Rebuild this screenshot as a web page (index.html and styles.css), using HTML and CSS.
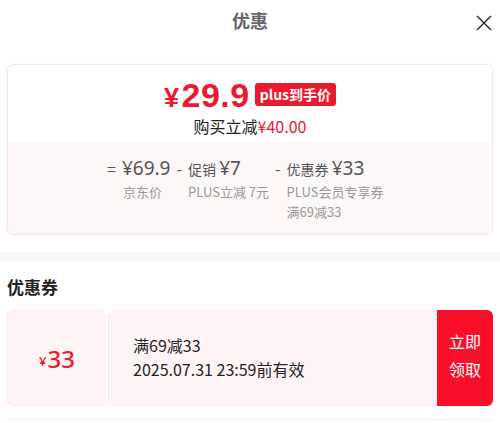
FILE: index.html
```html
<!DOCTYPE html>
<html lang="zh-CN">
<head>
  <meta charset="UTF-8" />
  <meta name="viewport" content="width=device-width, initial-scale=1.0" />
  <title>优惠</title>
  <link rel="stylesheet" href="styles.css">
</head>
<body>
  <div class="header">
    <h1 class="title">优惠</h1>
    <span class="close">
      <svg width="16" height="16" viewBox="0 0 16 16"><path d="M1 1L15 15M15 1L1 15" stroke="#222" stroke-width="1.4" fill="none"/></svg>
    </span>
  </div>

  <div class="card">
    <div class="card-top">
      <div class="price-line">
        <span class="price"><span class="yen">¥</span>29.9</span>
        <span class="badge">plus到手价</span>
      </div>
      <div class="save">购买立减<span class="red">¥40.00</span></div>
    </div>
    <div class="card-bottom">
      <div class="calc">
        <span class="op">=</span>
        <div class="col">
          <div class="val"><span class="num">¥69.9</span></div>
          <div class="lbl">京东价</div>
        </div>
      </div>
      <div class="calc">
        <span class="op">-</span>
        <div class="col">
          <div class="val">促销 <span class="num">¥7</span></div>
          <div class="lbl">PLUS立减 7元</div>
        </div>
      </div>
      <div class="calc">
        <span class="op">-</span>
        <div class="col">
          <div class="val">优惠券 <span class="num">¥33</span></div>
          <div class="lbl">PLUS会员专享券<br>满69减33</div>
        </div>
      </div>
    </div>
  </div>

  <div class="strip"></div>

  <h2 class="section-title">优惠券</h2>
  <div class="coupon">
    <div class="coupon-amount"><span class="small">¥</span>33</div>
    <div class="coupon-info">
      <div>满69减33</div>
      <div>2025.07.31 23:59前有效</div>
    </div>
    <button class="coupon-btn">立即<br>领取</button>
  </div>
  <div class="foot-line"></div>
</body>
</html>
```

FILE: styles.css
```css
body {
  margin: 0;
  background: #fff;
  font-family: "Noto Sans CJK SC", "Noto Sans", sans-serif;
  color: #333;
}
.header {
  position: relative;
  height: 40px;
  display: flex;
  align-items: center;
  justify-content: center;
}
.title {
  margin: 0;
  font-size: 18px;
  font-weight: bold;
  color: #666;
  line-height: 36px;
}
.close {
  position: absolute;
  right: 8px;
  top: 12px;
  width: 16px;
  height: 16px;
}
.card {
  margin: 24px 7px 0;
  border: 1px solid #f0eaea;
  border-radius: 6px;
  overflow: hidden;
  box-shadow: 0 0 3px rgba(0, 0, 0, 0.04);
}
.card-top {
  background: #fff;
  padding: 15px 0 5px;
  height: 58px;
  text-align: center;
}
.price-line {
  display: flex;
  justify-content: center;
  align-items: center;
  height: 32px;
}
.price {
  color: #ec1a2e;
  font-size: 34px;
  font-weight: bold;
  line-height: 32px;
  font-family: "Liberation Sans", sans-serif;
  letter-spacing: 0.5px;
}
.price .yen {
  font-size: 27px;
  margin-right: 2px;
}
.badge {
  background: #e91b2c;
  color: #fff;
  font-size: 14px;
  font-weight: bold;
  padding: 0 5px;
  height: 23px;
  line-height: 23px;
  border-radius: 3px;
  margin-left: 5px;
  margin-top: -4px;
}
.save {
  font-size: 16px;
  line-height: 22px;
  margin-top: 3px;
  color: #222;
}
.red {
  color: #e31a2c;
}
.card-bottom {
  background: #fdf7f7;
  display: flex;
  padding: 12px 0 15px 99px;
  height: 64px;
}
.calc {
  display: flex;
}
.op {
  font-size: 16px;
  color: #555;
  line-height: 26px;
  margin-right: 6px;
}
.val {
  font-size: 14px;
  color: #555;
  line-height: 26px;
  white-space: nowrap;
}
.num {
  font-size: 19px;
  font-family: "Noto Sans", sans-serif;
}
.lbl {
  font-size: 13px;
  color: #999;
  line-height: 20px;
}
.calc:first-child .col {
  margin-right: 6px;
}
.calc:first-child .lbl {
  padding-left: 1px;
}
.calc:nth-child(2) .col {
  margin-right: 6px;
}
.strip {
  height: 9px;
  background: #f6f6fb;
  margin-top: 17px;
}
.section-title {
  margin: 15px 7px 0;
  font-size: 17px;
  font-weight: bold;
  color: #222;
  line-height: 22px;
}
.coupon {
  display: flex;
  margin: 12px 7px 0;
  height: 96px;
}
.coupon-amount {
  width: 98px;
  background: #fef4f5;
  border: 1px solid #fbeaec;
  border-right: none;
  border-radius: 6px 0 0 6px;
  display: flex;
  align-items: center;
  justify-content: center;
  color: #ec1a2e;
  font-size: 24px;
  font-weight: 500;
  font-family: "Noto Sans", sans-serif;
  position: relative;
}
.coupon-amount .small {
  font-size: 13px;
  margin-top: 6px;
  margin-right: 1px;
}
.coupon-amount::before,
.coupon-amount::after {
  content: "";
  position: absolute;
  right: -5px;
  width: 8px;
  height: 8px;
  border-radius: 50%;
  background: #fff;
  z-index: 1;
}
.coupon-amount::before {
  top: -5px;
}
.coupon-amount::after {
  bottom: -5px;
}
.coupon-info {
  flex: 1;
  background: #fef4f5;
  border: 1px solid #fbeaec;
  border-left: 1px solid #fae3e6;
  margin-left: 2px;
  padding: 22px 0 0 24px;
  font-size: 16px;
  line-height: 24px;
  color: #222;
}
.coupon-btn {
  width: 56px;
  border: none;
  background: #fa0f2a;
  color: #fff;
  font-family: "Noto Sans CJK SC", sans-serif;
  font-size: 16px;
  line-height: 28px;
  border-radius: 0 6px 6px 0;
  padding: 0 0 6px;
}
.foot-line {
  height: 1px;
  background: #f0f0f0;
  margin: 13px 7px 0;
}
```
